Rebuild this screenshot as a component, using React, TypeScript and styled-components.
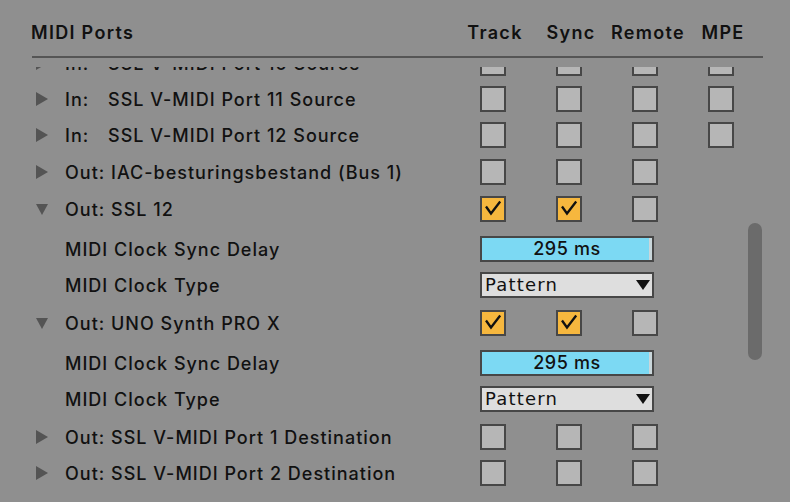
import React from "react";
import styled, { createGlobalStyle } from "styled-components";

type Port = {
  kind: "port";
  dir: "In:" | "Out:";
  name: string;
  open?: boolean;
  track: boolean;
  sync: boolean;
  mpe?: boolean;
  h: number;
};

type Setting = {
  kind: "delay" | "type";
  h: number;
};

type Row = Port | Setting;

const rows: Row[] = [
  { kind: "port", dir: "In:", name: "SSL V-MIDI Port 10 Source", track: false, sync: false, mpe: true, h: 36 },
  { kind: "port", dir: "In:", name: "SSL V-MIDI Port 11 Source", track: false, sync: false, mpe: true, h: 36 },
  { kind: "port", dir: "In:", name: "SSL V-MIDI Port 12 Source", track: false, sync: false, mpe: true, h: 37 },
  { kind: "port", dir: "Out:", name: "IAC-besturingsbestand (Bus 1)", track: false, sync: false, h: 37 },
  { kind: "port", dir: "Out:", name: "SSL 12", open: true, track: true, sync: true, h: 40 },
  { kind: "delay", h: 36 },
  { kind: "type", h: 38 },
  { kind: "port", dir: "Out:", name: "UNO Synth PRO X", open: true, track: true, sync: true, h: 40 },
  { kind: "delay", h: 36 },
  { kind: "type", h: 38 },
  { kind: "port", dir: "Out:", name: "SSL V-MIDI Port 1 Destination", track: false, sync: false, h: 36 },
  { kind: "port", dir: "Out:", name: "SSL V-MIDI Port 2 Destination", track: false, sync: false, h: 36 },
];

const Check: React.FC<{ on?: boolean }> = ({ on }) => (
  <Box $on={on}>
    {on && (
      <svg width="22" height="22" viewBox="0 0 22 22">
        <path d="M4 8.5 L9 15.5 L18.2 3.5" fill="none" stroke="#111" strokeWidth="2.3" />
      </svg>
    )}
  </Box>
);

const PortRow: React.FC<{ port: Port }> = ({ port }) => (
  <RowGrid $h={port.h}>
    <NameCell>
      <Twisty $open={port.open} />
      {port.dir === "In:" ? (
        <>
          <Dir>In:</Dir>
          {port.name}
        </>
      ) : (
        <span>
          {port.dir} {port.name}
        </span>
      )}
    </NameCell>
    <Cell><Check on={port.track} /></Cell>
    <Cell><Check on={port.sync} /></Cell>
    <Cell><Check /></Cell>
    <Cell>{port.mpe !== undefined && <Check />}</Cell>
  </RowGrid>
);

const SettingRow: React.FC<{ row: Setting }> = ({ row }) => (
  <RowGrid $h={row.h}>
    <NameCell>
      <Spacer />
      {row.kind === "delay" ? "MIDI Clock Sync Delay" : "MIDI Clock Type"}
    </NameCell>
    <WideCell>
      {row.kind === "delay" ? (
        <Slider>
          <SliderFill />
          <SliderValue>295 ms</SliderValue>
        </Slider>
      ) : (
        <Dropdown>
          Pattern
          <DropArrow />
        </Dropdown>
      )}
    </WideCell>
  </RowGrid>
);

export default function App() {
  return (
    <>
      <GlobalStyle />
      <Panel>
        <Header>
          <Title>MIDI Ports</Title>
          <ColLabel>Track</ColLabel>
          <ColLabel>Sync</ColLabel>
          <ColLabel>Remote</ColLabel>
          <ColLabel>MPE</ColLabel>
        </Header>
        <Viewport>
          <List>
            {rows.map((r, i) =>
              r.kind === "port" ? <PortRow key={i} port={r} /> : <SettingRow key={i} row={r} />
            )}
          </List>
        </Viewport>
        <ScrollThumb />
      </Panel>
    </>
  );
}

// Styled Components

const GlobalStyle = createGlobalStyle`
  html, body {
    margin: 0;
    padding: 0;
    background: #8f8f8f;
  }
  body {
    font-family: Inter, "Noto Sans", sans-serif;
    color: #111;
  }
`;

const Panel = styled.div`
  position: relative;
  width: 790px;
  height: 502px;
  overflow: hidden;
  background: #8f8f8f;
`;

const Header = styled.div`
  display: grid;
  grid-template-columns: 1fr repeat(4, 76px);
  align-items: center;
  margin-left: 32px;
  width: 731px;
  padding: 22px 4px 12px 0;
  box-sizing: border-box;
  height: 58px;
  border-bottom: 2px solid #555;
  font-size: 18px;
  font-weight: 600;
  line-height: 22px;
  letter-spacing: 1.3px;
`;

const Title = styled.div`
  margin-left: -1px;
`;

const ColLabel = styled.div`
  text-align: center;
  white-space: nowrap;
  margin-left: 4px;
`;

const Viewport = styled.div`
  margin-top: 9px;
  height: 435px;
  overflow: hidden;
`;

const List = styled.div`
  margin-top: -22px;
  margin-left: 32px;
  width: 731px;
  padding-right: 4px;
  box-sizing: border-box;
`;

const RowGrid = styled.div<{ $h: number }>`
  display: grid;
  grid-template-columns: 1fr repeat(4, 76px);
  align-items: start;
  height: ${(p) => p.$h}px;
  padding-top: 5px;
  box-sizing: border-box;
  font-size: 18px;
  font-weight: 500;
  letter-spacing: 1px;
`;

const NameCell = styled.div`
  display: flex;
  align-items: center;
  height: 26px;
  white-space: nowrap;
`;

const Twisty = styled.div<{ $open?: boolean }>`
  width: 33px;
  flex: none;
  position: relative;
  height: 14px;

  &::before {
    content: "";
    position: absolute;
    left: 4px;
    top: ${(p) => (p.$open ? "2px" : "0")};
    border-style: solid;
    border-color: transparent;
    ${(p) =>
      p.$open
        ? `border-width: 11px 6.5px 0 6.5px; border-top-color: #545454;`
        : `border-width: 7px 0 7px 12px; border-left-color: #545454;`}
  }
`;

const Spacer = styled.div`
  width: 33px;
  flex: none;
`;

const Dir = styled.span`
  width: 43px;
  flex: none;
`;

const Cell = styled.div`
  display: flex;
  justify-content: center;
  height: 26px;
`;

const Box = styled.div<{ $on?: boolean }>`
  width: 26px;
  height: 26px;
  box-sizing: border-box;
  border: 2px solid #474747;
  background: ${(p) => (p.$on ? "#f6b73e" : "#b6b6b6")};

  svg {
    display: block;
  }
`;

const WideCell = styled.div`
  grid-column: 2 / 5;
  padding-left: 25px;
`;

const Slider = styled.div`
  position: relative;
  width: 174px;
  height: 26px;
  box-sizing: border-box;
  border: 2px solid #474747;
  background: #c9d6da;
`;

const SliderFill = styled.div`
  position: absolute;
  left: 0;
  top: 0;
  bottom: 0;
  width: 167px;
  background: #7cd9f3;
`;

const SliderValue = styled.div`
  position: relative;
  text-align: center;
  line-height: 22px;
  font-size: 18px;
  font-weight: 500;
  letter-spacing: 0.6px;
`;

const Dropdown = styled.div`
  position: relative;
  width: 174px;
  height: 26px;
  box-sizing: border-box;
  border: 2px solid #474747;
  background: #dedede;
  padding-left: 3px;
  line-height: 22px;
  font-family: "DejaVu Sans", sans-serif;
  font-size: 18px;
  font-weight: 400;
  letter-spacing: 1.2px;
`;

const DropArrow = styled.div`
  position: absolute;
  right: 2px;
  top: 6px;
  border-style: solid;
  border-color: #111 transparent transparent transparent;
  border-width: 10px 7px 0 7px;
`;

const ScrollThumb = styled.div`
  position: absolute;
  left: 748px;
  top: 223px;
  width: 14px;
  height: 137px;
  border-radius: 7px;
  background: #6b6b6b;
`;
